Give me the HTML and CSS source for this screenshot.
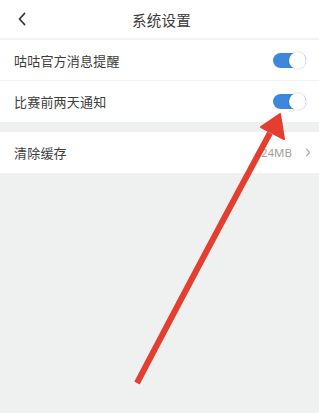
FILE: index.html
```html
<!DOCTYPE html>
<html lang="zh">
<head>
<meta charset="utf-8">
<link rel="stylesheet" href="styles.css">
</head>
<body>
<div class="page">
  <header class="topbar">
    <svg class="back" width="10" height="14" viewBox="0 0 10 14"><path d="M7.5 1.5 L2.5 7 L7.5 12.5" fill="none" stroke="#333" stroke-width="1.8" stroke-linecap="round" stroke-linejoin="round"/></svg>
    <h1 class="title">系统设置</h1>
  </header>
  <section class="group first">
    <div class="row bordered">
      <span class="label">咕咕官方消息提醒</span>
      <span class="switch"><span class="knob"></span></span>
    </div>
    <div class="row">
      <span class="label">比赛前两天通知</span>
      <span class="switch"><span class="knob"></span></span>
    </div>
  </section>
  <section class="group">
    <div class="row cache">
      <span class="label">清除缓存</span>
      <span class="value">24MB<svg class="chev" width="6" height="9" viewBox="0 0 6 9"><path d="M1.5 1.2 L4.6 4.5 L1.5 7.8" fill="none" stroke="#aaa" stroke-width="1.2" stroke-linecap="round"/></svg></span>
    </div>
  </section>
  <svg class="arrow" width="319" height="413" viewBox="0 0 319 413">
    <path d="M137 383 Q 212 240 270 133" fill="none" stroke="#e33e2f" stroke-width="6"/>
    <path d="M280 114 L261 127 L284 139 Z" fill="#e33e2f" stroke="#e33e2f" stroke-width="2" stroke-linejoin="round"/>
  </svg>
</div>
</body>
</html>
```
FILE: styles.css
```css
html, body {
  margin: 0;
  padding: 0;
  background: #eff0f0;
}
body {
  font-family: "Noto Sans CJK SC", "Noto Sans", sans-serif;
  color: #333;
}
.page {
  position: relative;
  width: 319px;
  height: 413px;
  overflow: hidden;
  background: #eff0f0;
}
.topbar {
  position: relative;
  height: 38px;
  background: #fff;
  display: flex;
  align-items: center;
  justify-content: center;
  border-bottom: 2px solid #f4f4f4;
}
.back {
  position: absolute;
  left: 17px;
  top: 12px;
}
.title {
  margin: 0;
  font-size: 14.5px;
  font-weight: normal;
  color: #3a3a3a;
  letter-spacing: 0.3px;
  padding-left: 4px;
}
.group {
  background: #fff;
  margin-bottom: 10px;
}
.row {
  height: 41px;
  display: flex;
  align-items: center;
  justify-content: space-between;
  padding: 0 13px 0 14px;
}
.bordered {
  height: 40px;
  border-bottom: 1px solid #f2f2f2;
}
.cache {
  padding-right: 8px;
}
.label {
  font-size: 13px;
  color: #3c3c3c;
  letter-spacing: 0.2px;
}
.switch {
  width: 33px;
  height: 15px;
  border-radius: 8px;
  background: #3d88dd;
  position: relative;
}
.knob {
  position: absolute;
  right: 0;
  top: -1px;
  width: 17px;
  height: 17px;
  border-radius: 50%;
  background: #fff;
  box-shadow: 0 0 2px rgba(0,0,0,0.25);
}
.value {
  font-size: 11.5px;
  color: #a0a0a0;
  display: flex;
  align-items: center;
  gap: 13px;
  font-family: "Noto Sans", sans-serif;
}
.arrow {
  position: absolute;
  left: 0;
  top: 0;
}
```
